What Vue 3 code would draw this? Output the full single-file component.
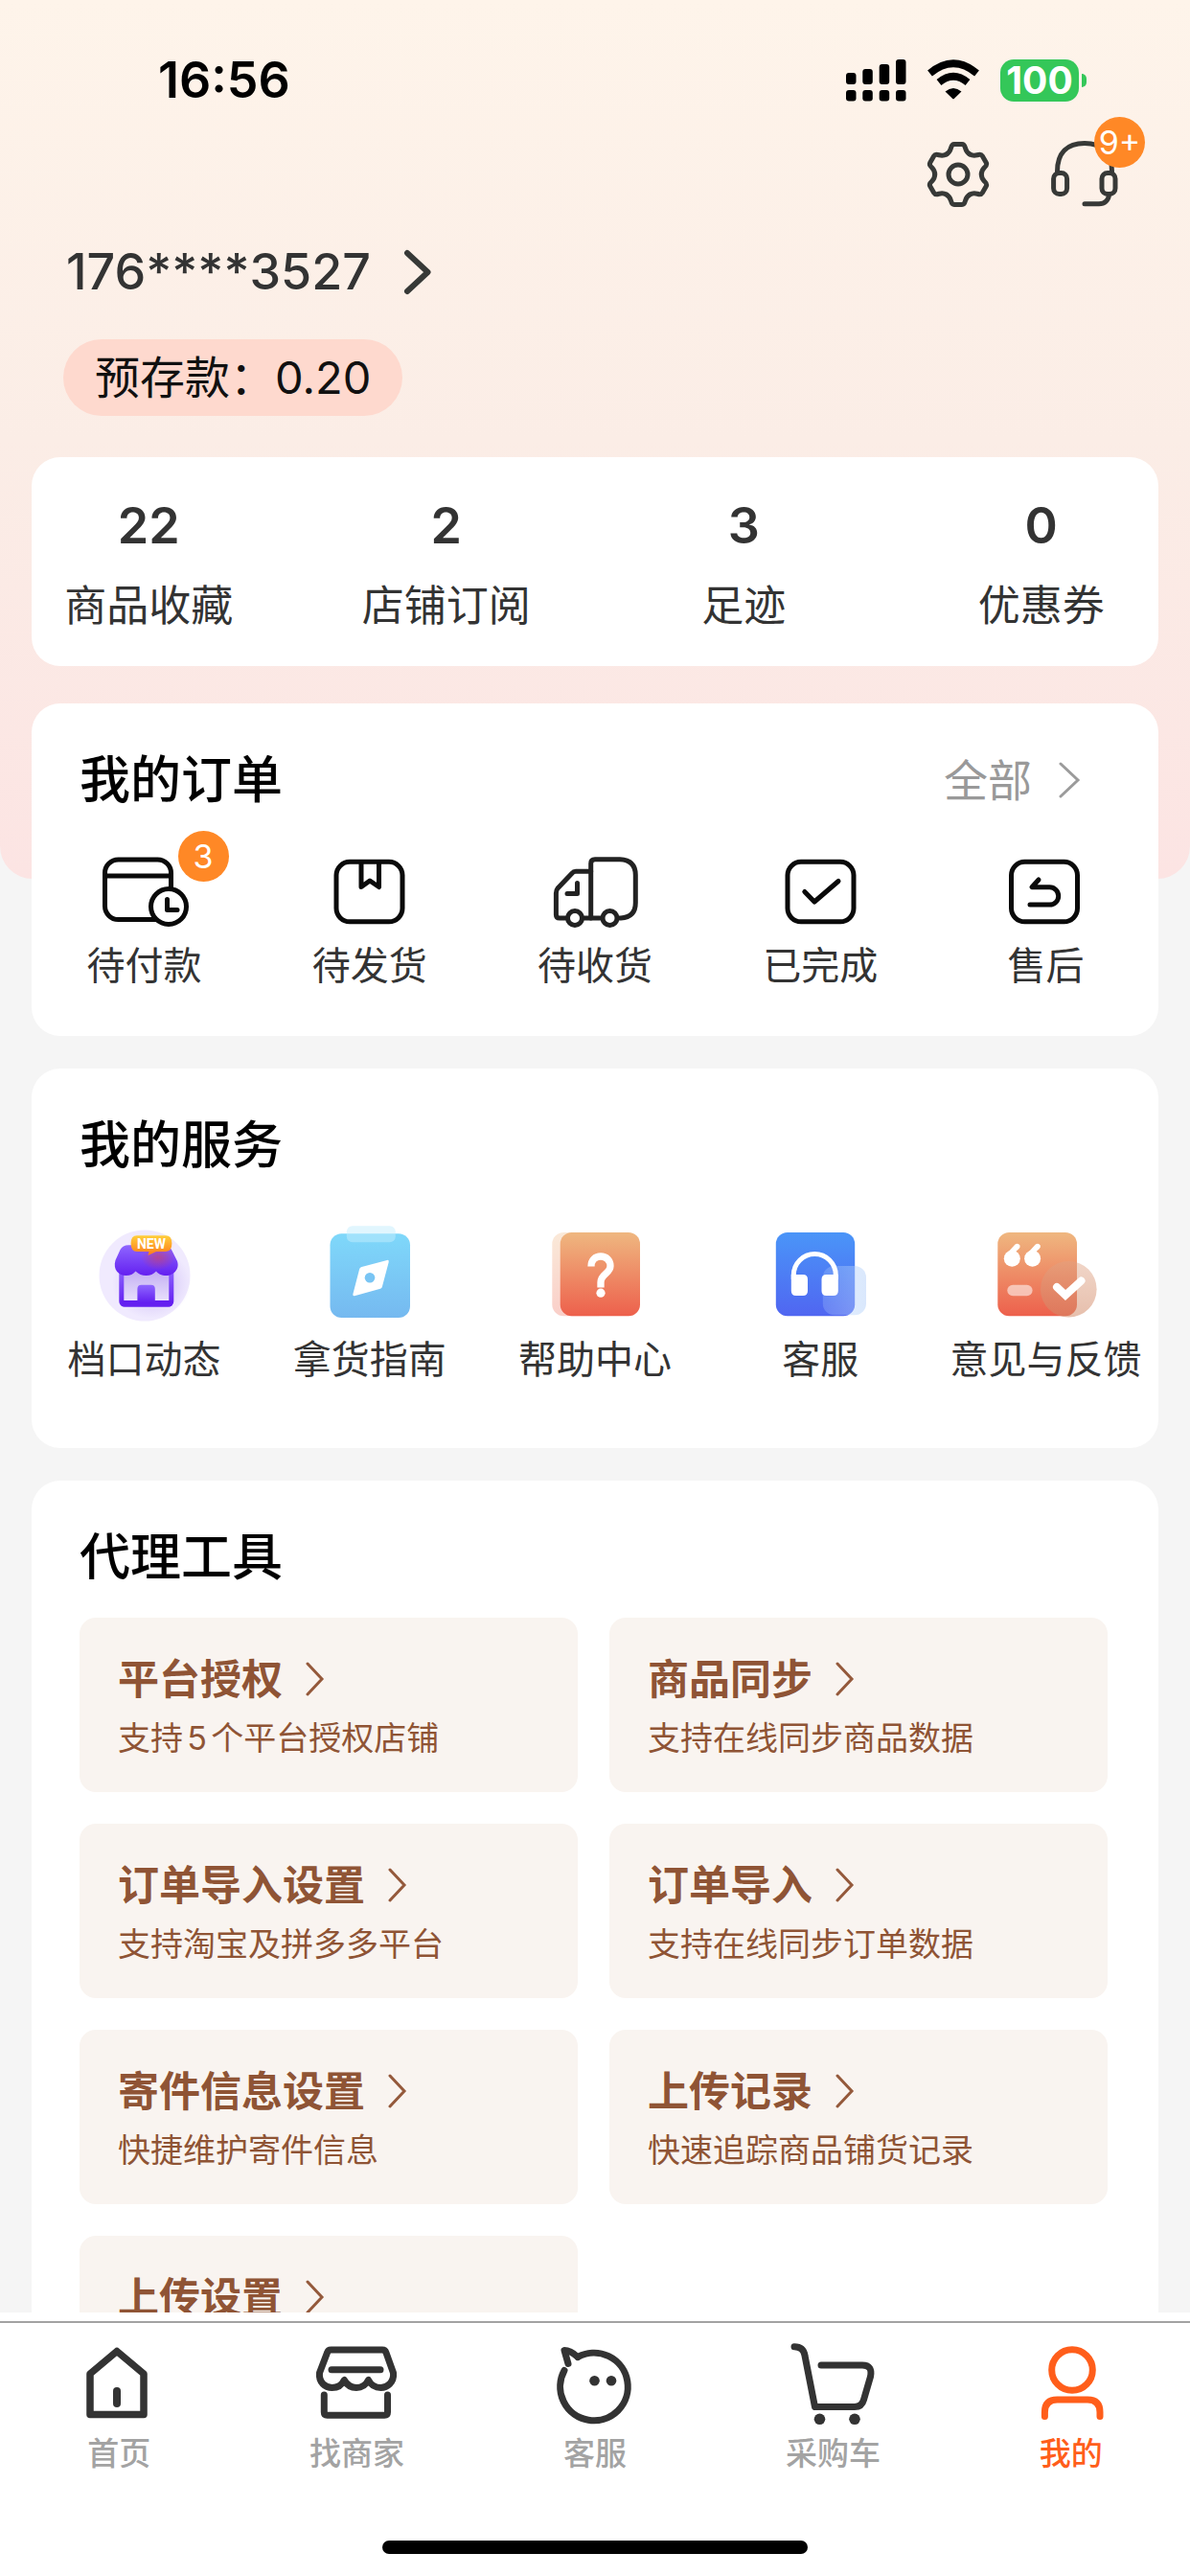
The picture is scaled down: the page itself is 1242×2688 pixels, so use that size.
<script setup>
import { ref } from "vue";

const phone = ref("176****3527");
const deposit = ref("0.20");

const stats = ref([
	{ label: "商品收藏", value: 22 },
	{ label: "店铺订阅", value: 2 },
	{ label: "足迹", value: 3 },
	{ label: "优惠券", value: 0 },
]);

const tools = [
	{ name: "平台授权", desc: "支持5个平台授权店铺" },
	{ name: "商品同步", desc: "支持在线同步商品数据" },
	{ name: "订单导入设置", desc: "支持淘宝及拼多多平台" },
	{ name: "订单导入", desc: "支持在线同步订单数据" },
	{ name: "寄件信息设置", desc: "快捷维护寄件信息" },
	{ name: "上传记录", desc: "快速追踪商品铺货记录" },
	{ name: "上传设置", desc: "" },
];

// the gear outline is one tooth repeated every 60 degrees
const gearAngles = [0, 60, 120, 180, 240, 300];
</script>

<template>
	<div class="page">
		<main class="content">
			<section class="hero">
				<div class="status-bar">
					<span class="time">16:56</span>
					<div class="status-icons">
						<svg class="signal" width="63" height="44" viewBox="0 0 63 44">
							<rect x="0" y="14" width="10.5" height="12" rx="3" />
							<rect x="17.3" y="10" width="10.5" height="16" rx="3" />
							<rect x="34.7" y="5" width="10.5" height="21" rx="3" />
							<rect x="52" y="0" width="10.5" height="26" rx="3" />
							<rect x="0" y="32" width="10.5" height="11.5" rx="3" />
							<rect x="17.3" y="32" width="10.5" height="11.5" rx="3" />
							<rect x="34.7" y="32" width="10.5" height="11.5" rx="3" />
							<rect x="52" y="32" width="10.5" height="11.5" rx="3" />
						</svg>
						<svg class="wifi" width="56" height="44" viewBox="0 0 56 44">
							<path d="M3.5 14.5Q28-6 52.500 14.500" fill="none" stroke="#000" stroke-width="7.500" />
							<path d="M13 24Q28 11.500 43 24" fill="none" stroke="#000" stroke-width="7.500" />
							<path d="M19.500 33.500Q28 26.500 36.500 33.500L29 40.800Q28 41.800 27 40.800Z" />
						</svg>
						<span class="battery">100</span>
					</div>
				</div>

				<div class="actions">
					<button type="button" aria-label="设置">
						<svg width="72" height="72" viewBox="0 0 72 72">
							<g transform="translate(36 37)" fill="none" stroke="#373937" stroke-width="5" stroke-linecap="round">
								<path
									v-for="angle in gearAngles"
									:key="angle"
									:transform="`rotate(${angle})`"
									d="M-12.200-21C-8.700-23-8.200-25-7.500-27.500Q-6.500-31.500-4-31.500H4Q6.500-31.500 7.500-27.500C8.200-25 8.700-23 12.200-21"
								/>
								<circle r="10" />
							</g>
						</svg>
					</button>
					<button type="button" aria-label="消息">
						<svg width="72" height="72" viewBox="0 0 72 72">
							<g fill="none" stroke="#373937" stroke-width="5" stroke-linecap="round">
								<path d="M7.500 34C7.500 14 18 4.500 36 4.500S64.500 14 64.500 34" />
								<rect x="3.600" y="35.500" width="14" height="22" rx="6" />
								<rect x="54" y="35.500" width="14" height="22" rx="6" />
								<path d="M61.500 58C61 64 57 67.700 51 67.700H36" />
							</g>
						</svg>
						<span class="badge">9+</span>
					</button>
				</div>

				<a class="account" href="#">
					<span>{{ phone }}</span>
					<svg width="32" height="48" viewBox="0 0 32 48">
						<path d="M4 4 25.500 24 4 44" fill="none" stroke="#373937" stroke-width="6" stroke-linecap="round" stroke-linejoin="round" />
					</svg>
				</a>

				<div class="deposit">预存款：{{ deposit }}</div>

				<div class="card stats">
					<a v-for="item in stats" :key="item.label" class="stat" href="#">
						<strong>{{ item.value }}</strong>
						<span>{{ item.label }}</span>
					</a>
				</div>
			</section>

			<div class="sections">
				<section class="card orders">
					<div class="card-head">
						<h2>我的订单</h2>
						<a class="more" href="#">
							全部
							<svg width="24" height="40" viewBox="0 0 24 40">
								<path d="M2 3 20 20 2 37" fill="none" stroke="#9b9b9b" stroke-width="3" stroke-linecap="round" />
							</svg>
						</a>
					</div>
					<nav class="icon-row">
						<a href="#">
							<span class="icon">
								<svg class="line" width="100" height="80" viewBox="0 0 100 80">
									<rect x="8.500" y="7" width="69" height="62.500" rx="14" />
									<path d="M8.500 24H77.500" />
									<circle cx="75" cy="56" r="18.500" fill="#fff" />
									<path d="M73.500 48.500V59.500H84" />
								</svg>
								<span class="badge">3</span>
							</span>
							待付款
						</a>
						<a href="#">
							<svg class="line" width="100" height="80" viewBox="0 0 100 80">
								<rect x="15" y="9.300" width="69" height="62.500" rx="14" />
								<path d="M41 10V35.500L50 29 59.500 35.500V10" />
							</svg>
							待发货
						</a>
						<a href="#">
							<svg class="line truck" width="100" height="80" viewBox="0 0 100 80">
								<path d="M45.700 19.300H30Q27.500 19.300 26 21.200L11 37Q9.400 39 9.400 42V64.500Q9.400 68 13 68H45.700" />
								<path d="M45.700 68V11Q45.700 6.700 50 6.700H76Q92.300 7.500 92.300 23V52Q92.300 67 77 68Z" />
								<path d="M31.500 31.500V42.500H21" />
								<circle cx="29" cy="68" r="7.500" fill="#fff" />
								<circle cx="65.500" cy="68" r="7.500" fill="#fff" />
							</svg>
							待收货
						</a>
						<a href="#">
							<svg class="line" width="100" height="80" viewBox="0 0 100 80">
								<rect x="16" y="9.300" width="69" height="62.500" rx="14" />
								<path d="M33.800 40.500 44 51 69 29.500" />
							</svg>
							已完成
						</a>
						<a href="#">
							<svg class="line" width="100" height="80" viewBox="0 0 100 80">
								<rect x="14.500" y="9.300" width="69" height="62.500" rx="14" />
								<path d="M43 28 36 35.700H54.500A9.200 9.200 0 0 1 54.500 54.100H34" />
							</svg>
							售后
						</a>
					</nav>
				</section>

				<section class="card services">
					<div class="card-head">
						<h2>我的服务</h2>
					</div>
					<nav class="icon-row">
						<a href="#">
							<svg width="110" height="100" viewBox="0 0 110 100">
								<defs>
									<linearGradient id="roof" x1="0" y1="0" x2="0" y2="1">
										<stop offset="0" stop-color="#8e66ff" />
										<stop offset="1" stop-color="#6420f0" />
									</linearGradient>
									<linearGradient id="tag" x1="0" y1="0" x2="0" y2="1">
										<stop offset="0" stop-color="#ffcf3a" />
										<stop offset="1" stop-color="#fd7a1c" />
									</linearGradient>
									<radialGradient id="glow">
										<stop offset="0" stop-color="#b79cf0" stop-opacity="0.900" />
										<stop offset="1" stop-color="#c9b8f5" stop-opacity="0" />
									</radialGradient>
									<radialGradient id="tint">
										<stop offset="0" stop-color="#d0405a" stop-opacity="0.600" />
										<stop offset="1" stop-color="#d0405a" stop-opacity="0" />
									</radialGradient>
									<linearGradient id="wall" x1="0" y1="0" x2="0" y2="1">
										<stop offset="0" stop-color="#c0aaf2" />
										<stop offset="1" stop-color="#ece5fd" />
									</linearGradient>
								</defs>
								<circle cx="55" cy="52" r="47.500" fill="#f0eafe" />
								<ellipse cx="62" cy="60" rx="41" ry="37" fill="url(#glow)" />
								<rect x="30.800" y="44" width="52" height="38" rx="3" fill="url(#wall)" stroke="url(#roof)" stroke-width="5" />
								<path d="M30 78H84V81Q84 84.500 80 84.500H34Q30 84.500 30 81Z" fill="#641ff0" />
								<path d="M47.400 80V66Q47.400 61.700 51.500 61.700H61.700Q65.800 61.700 65.800 66V80Z" fill="url(#roof)" />
								<path d="M38 20.300H75Q81 20.300 83.500 26L89 37C92 46 84 52 78 52 72 52 69 50 67 47.500 64 50.500 61 52 56.500 52 52 52 49 50.500 45.500 47.500 43 50.500 40 52 35.500 52 28 52 21.500 46 24.500 36L29.500 25Q32 20.300 38 20.300Z" fill="url(#roof)" />
								<ellipse cx="69" cy="33" rx="18" ry="13" fill="url(#tint)" />
								<path d="M47 10.300H77Q83.400 10.300 83.400 18.600T77 27H67L58.500 31 59.500 27H47Q40.600 27 40.600 18.600T47 10.300Z" fill="url(#tag)" />
								<text x="62" y="24" class="tag-text">NEW</text>
							</svg>
							档口动态
						</a>
						<a href="#">
							<svg width="110" height="100" viewBox="0 0 110 100">
								<defs>
									<linearGradient id="sky" x1="0" y1="0" x2="0" y2="1">
										<stop offset="0" stop-color="#7fd8fa" />
										<stop offset="1" stop-color="#75b9f0" />
									</linearGradient>
								</defs>
								<rect x="13.500" y="8.300" width="83.500" height="87.700" rx="12" fill="url(#sky)" />
								<rect x="30.800" y="0.300" width="51" height="17" rx="6" fill="#c4eefd" fill-opacity="0.500" />
								<path d="M46.500 43 73 35.900Q75.200 35.500 74.700 38L67.800 64Q67.500 65.200 66 65.700L39 73.300Q36.800 73.600 37.400 71.200L44.200 45Q44.800 43.500 46.500 43Z" fill="#fff" />
								<circle cx="55" cy="54.300" r="5.300" fill="#79c5f4" />
							</svg>
							拿货指南
						</a>
						<a href="#">
							<svg width="110" height="100" viewBox="0 0 110 100">
								<defs>
									<linearGradient id="coral" x1="0" y1="0" x2="0" y2="1">
										<stop offset="0" stop-color="#efb780" />
										<stop offset="1" stop-color="#ed604c" />
									</linearGradient>
								</defs>
								<rect x="10.300" y="7" width="60" height="87.300" rx="12" fill="url(#coral)" fill-opacity="0.300" />
								<rect x="18.700" y="7" width="83.300" height="87.300" rx="12" fill="url(#coral)" />
								<path d="M51 42.500C51 35.500 55.500 32 61 32S71 36 71 42C71 50 61 50 61 59V64.500" fill="none" stroke="#fff" stroke-width="7.300" />
								<circle cx="61" cy="70.200" r="4.600" fill="#fff" />
							</svg>
							帮助中心
						</a>
						<a href="#">
							<svg width="110" height="100" viewBox="0 0 110 100">
								<defs>
									<linearGradient id="azure" x1="0" y1="0" x2="0" y2="1">
										<stop offset="0" stop-color="#4a95f8" />
										<stop offset="1" stop-color="#5066f1" />
									</linearGradient>
									<linearGradient id="veil">
										<stop offset="0" stop-color="#b3d0fa" stop-opacity="0.250" />
										<stop offset="1" stop-color="#b3d0fa" stop-opacity="0.500" />
									</linearGradient>
								</defs>
								<rect x="8.800" y="7" width="82.400" height="87.300" rx="12" fill="url(#azure)" />
								<rect x="57.800" y="42" width="45.200" height="51.300" rx="12" fill="url(#veil)" />
								<path d="M27.300 56V51.500A22 22 0 0 1 71.300 51.500V56" fill="none" stroke="#fff" stroke-width="5" />
								<path d="M24.800 51H37Q42 51 42 56V68Q42 73 37 73H29.800Q24.800 73 24.800 68ZM73.800 51H61.500Q56.500 51 56.500 56V68Q56.500 73 61.500 73H68.800Q73.800 73 73.800 68Z" fill="#fff" />
							</svg>
							客服
						</a>
						<a href="#">
							<svg width="110" height="100" viewBox="0 0 110 100">
								<defs>
									<linearGradient id="disc" x1="0" y1="0" x2="0" y2="1">
										<stop offset="0" stop-color="#dfa284" stop-opacity="0.450" />
										<stop offset="1" stop-color="#d28a68" stop-opacity="0.550" />
									</linearGradient>
								</defs>
								<rect x="5.300" y="7" width="82.700" height="87.300" rx="12" fill="url(#coral)" />
								<g fill="#fff">
									<circle cx="20.300" cy="34.300" r="8.500" />
									<circle cx="41.600" cy="34.300" r="8.500" />
									<path d="M12 32 23.500 19.500Q26.500 17.500 28.500 20.500 29 22.500 27.500 24L21 30ZM33.300 32 44.800 19.500Q47.800 17.500 49.800 20.500 50.300 22.500 48.800 24L42.300 30Z" />
									<rect x="15.300" y="61.700" width="26.300" height="11.600" rx="5.800" fill-opacity="0.550" />
								</g>
								<circle cx="79.300" cy="66.300" r="29.300" fill="url(#disc)" />
								<path d="M67 64 76 72.500 92.500 57.500" fill="none" stroke="#fff" stroke-width="8" stroke-linecap="round" />
							</svg>
							意见与反馈
						</a>
					</nav>
				</section>

				<section class="card tools">
					<div class="card-head">
						<h2>代理工具</h2>
					</div>
					<div class="tool-grid">
						<a v-for="tool in tools" :key="tool.name" class="tool" href="#">
							<h3>
								{{ tool.name }}
								<svg width="20" height="36" viewBox="0 0 20 36">
									<path d="M2 2 17 18 2 34" fill="none" stroke="#94593b" stroke-width="3" stroke-linecap="round" />
								</svg>
							</h3>
							<p v-if="tool.desc">{{ tool.desc }}</p>
						</a>
					</div>
				</section>
			</div>
		</main>

		<footer class="footer">
			<nav class="tabs">
				<a href="#">
					<svg width="90" height="88" viewBox="0 0 90 88">
						<path d="M15 33 43 9.500 71 33V75.500H15Z" stroke-width="7.500" />
						<path d="M43 51V64" stroke-width="8" />
					</svg>
					首页
				</a>
				<a href="#">
					<svg width="90" height="88" viewBox="0 0 90 88">
						<path d="M17.500 8H71Q74 8 75 11L82.500 32C83.500 42 76 47.500 69.500 47.500 63.500 47.500 59 44.500 56.500 39.500 54 44.500 49.500 47.500 44 47.500S34 44.500 31.300 39.500C29 44.500 24 47.500 18.500 47.500 11.500 47.500 4.500 42 5.500 32L13.500 11Q14.500 8 17.500 8Z" />
						<path d="M18 28.700H69" />
						<path d="M10.300 55V73Q10.300 76.300 13.500 76.300H73.300Q76.500 76.300 76.500 73V55" />
					</svg>
					找商家
				</a>
				<a href="#">
					<svg width="90" height="88" viewBox="0 0 90 88">
						<path d="M27 15.500A35.300 35.300 0 1 1 13 29.500" />
						<path d="M17 22.500 13 8.500Q19.500 8.500 27 15.500" />
						<circle class="dot" cx="44.500" cy="40.300" r="5.300" />
						<circle class="dot" cx="62" cy="40.300" r="5.300" />
					</svg>
					客服
				</a>
				<a href="#">
					<svg width="90" height="88" viewBox="0 0 90 88">
						<path d="M5 4.800Q14.500 4.800 16 14L26.500 67.500H68Q75.500 67.500 77.500 60L84.500 36Q87 24 76 24H33" />
						<circle class="dot" cx="31.500" cy="80.300" r="5.800" />
						<circle class="dot" cx="68" cy="80.300" r="5.800" />
					</svg>
					采购车
				</a>
				<a href="#" class="active">
					<svg width="90" height="88" viewBox="0 0 90 88">
						<circle cx="46" cy="29" r="21.300" />
						<path d="M17.400 77.500V73Q17.400 60 30.500 60H62Q75 60 75 73V77.500" />
					</svg>
					我的
				</a>
			</nav>
			<div class="home-indicator"></div>
		</footer>
	</div>
</template>

<style>
body {
	margin: 0;
	background: #fff;
}
</style>

<style scoped>
.page {
	display: flex;
	flex-direction: column;
	height: 100vh;
	background: #f5f5f5;
	color: #333;
	font-family: Inter, "Noto Sans CJK SC", sans-serif;
	text-autospace: normal;
}

a {
	color: inherit;
	text-decoration: none;
}

svg {
	display: block;
	flex: none;
}

h2,
h3,
p {
	margin: 0;
}

button {
	position: relative;
	padding: 0;
	border: 0;
	background: none;
	font: inherit;
}

.content {
	flex: 1;
	min-height: 0;
	overflow-y: auto;
	scrollbar-width: none;
}

.hero {
	padding: 56px 33px 222px;
	border-radius: 0 0 34px 34px;
	background: linear-gradient(#fef4ea, #fbede6 50%, #fce4e3);
}

.status-bar {
	display: flex;
	align-items: center;
	justify-content: space-between;
	padding: 0 75px 0 132px;
	color: #000;
}

.time {
	font-size: 52px;
	font-weight: 600;
	line-height: 56px;
}

.status-icons {
	display: flex;
	align-items: center;
	gap: 21px;
}

.battery {
	position: relative;
	width: 82px;
	margin-right: 8px;
	border-radius: 14px;
	background: #34c759;
	color: #fff;
	font-size: 39px;
	font-weight: 700;
	line-height: 44px;
	text-align: center;
}

.battery::after {
	content: "";
	position: absolute;
	top: 15px;
	right: -8px;
	width: 5px;
	height: 14px;
	border-radius: 0 5px 5px 0;
	background: #34c759;
}

.actions {
	display: flex;
	justify-content: flex-end;
	gap: 60px;
	margin-top: 33px;
	padding-right: 41px;
}

.badge {
	position: absolute;
	width: 53px;
	border-radius: 50%;
	background: #ff8826;
	color: #fff;
	font-size: 34px;
	font-weight: 400;
	line-height: 53px;
	text-align: center;
}

.actions .badge {
	top: -23px;
	right: -27px;
}

.icon {
	position: relative;
}

.icon .badge {
	top: -23px;
	left: 85px;
}

.account {
	display: flex;
	align-items: center;
	gap: 34px;
	margin-top: 37px;
	padding-left: 36px;
	font-size: 52px;
	font-weight: 500;
	line-height: 60px;
}

.deposit {
	width: fit-content;
	margin: 40px 0 43px 33px;
	padding: 0 33px;
	border-radius: 40px;
	background: #fed9ce;
	color: #111;
	font-size: 47px;
	line-height: 80px;
}

.card {
	border-radius: 30px;
	background: #fff;
}

.stats {
	display: flex;
	padding: 42px 0 33px;
}

/* the four columns are spread over the whole screen, not over the card */
.stat {
	flex: 1;
	display: flex;
	flex-direction: column;
	align-items: center;
	gap: 23px;
	font-size: 44px;
	line-height: 60px;
}

.stat:first-child {
	margin-left: -33px;
}

.stat:last-child {
	margin-right: -33px;
}

.stat strong {
	font-size: 52px;
	font-weight: 600;
}

.sections {
	display: flex;
	flex-direction: column;
	gap: 34px;
	margin-top: -183px;
	padding: 0 33px 34px;
}

.card-head {
	display: flex;
	align-items: center;
	justify-content: space-between;
	padding: 50px 80px 0 50px;
	line-height: 60px;
}

h2 {
	color: #000;
	font-size: 53px;
	font-weight: 500;
}

.more {
	display: flex;
	align-items: center;
	gap: 28px;
	color: #999;
	font-size: 46px;
}

.icon-row {
	display: flex;
}

.icon-row a {
	flex: 1 1 0;
	min-width: 0;
	display: flex;
	flex-direction: column;
	align-items: center;
	font-size: 40px;
	line-height: 48px;
	white-space: nowrap;
}

.orders .icon-row {
	padding: 46px 0 49px;
}

.orders .icon-row a {
	gap: 14px;
}

.services .icon-row {
	padding: 54px 0 68px;
}

.services .icon-row a {
	gap: 16px;
}

.line {
	fill: none;
	stroke: #0a0a0a;
	stroke-width: 5;
	stroke-linecap: round;
	stroke-linejoin: round;
}

.truck {
	stroke: #222;
}

.tag-text {
	fill: #fff;
	font-family: Roboto, sans-serif;
	font-size: 14px;
	font-weight: 700;
	text-anchor: middle;
}

.tool-grid {
	display: grid;
	grid-template-columns: 1fr 1fr;
	gap: 33px;
	padding: 33px 53px 50px 50px;
}

.tool {
	box-sizing: border-box;
	min-height: 182px;
	padding: 39px 40px 36px;
	border-radius: 17px;
	background: #f9f4f0;
	color: #8f5435;
}

h3 {
	display: flex;
	align-items: center;
	gap: 24px;
	font-size: 43px;
	font-weight: 600;
	line-height: 50px;
}

.tool p {
	margin-top: 17px;
	font-size: 34px;
	line-height: 40px;
}

.footer {
	padding: 9px 0 23px;
	background: #fff;
}

.tabs {
	display: flex;
	padding-top: 20px;
	border-top: 2px solid #a3a3a3;
}

.tabs a {
	flex: 1;
	display: flex;
	flex-direction: column;
	align-items: center;
	gap: 8px;
	color: #a3a3a3;
	font-size: 33px;
	font-weight: 500;
	line-height: 40px;
}

.tabs svg {
	fill: none;
	stroke: #333;
	stroke-width: 7;
	stroke-linecap: round;
	stroke-linejoin: round;
}

.tabs .dot {
	fill: #333;
	stroke: none;
}

.tabs .active {
	color: #ff5e1b;
}

.tabs .active svg {
	stroke: #ff5e1b;
}

.home-indicator {
	width: 444px;
	height: 14px;
	margin: 71px auto 0;
	border-radius: 7px;
	background: #000;
}
</style>
